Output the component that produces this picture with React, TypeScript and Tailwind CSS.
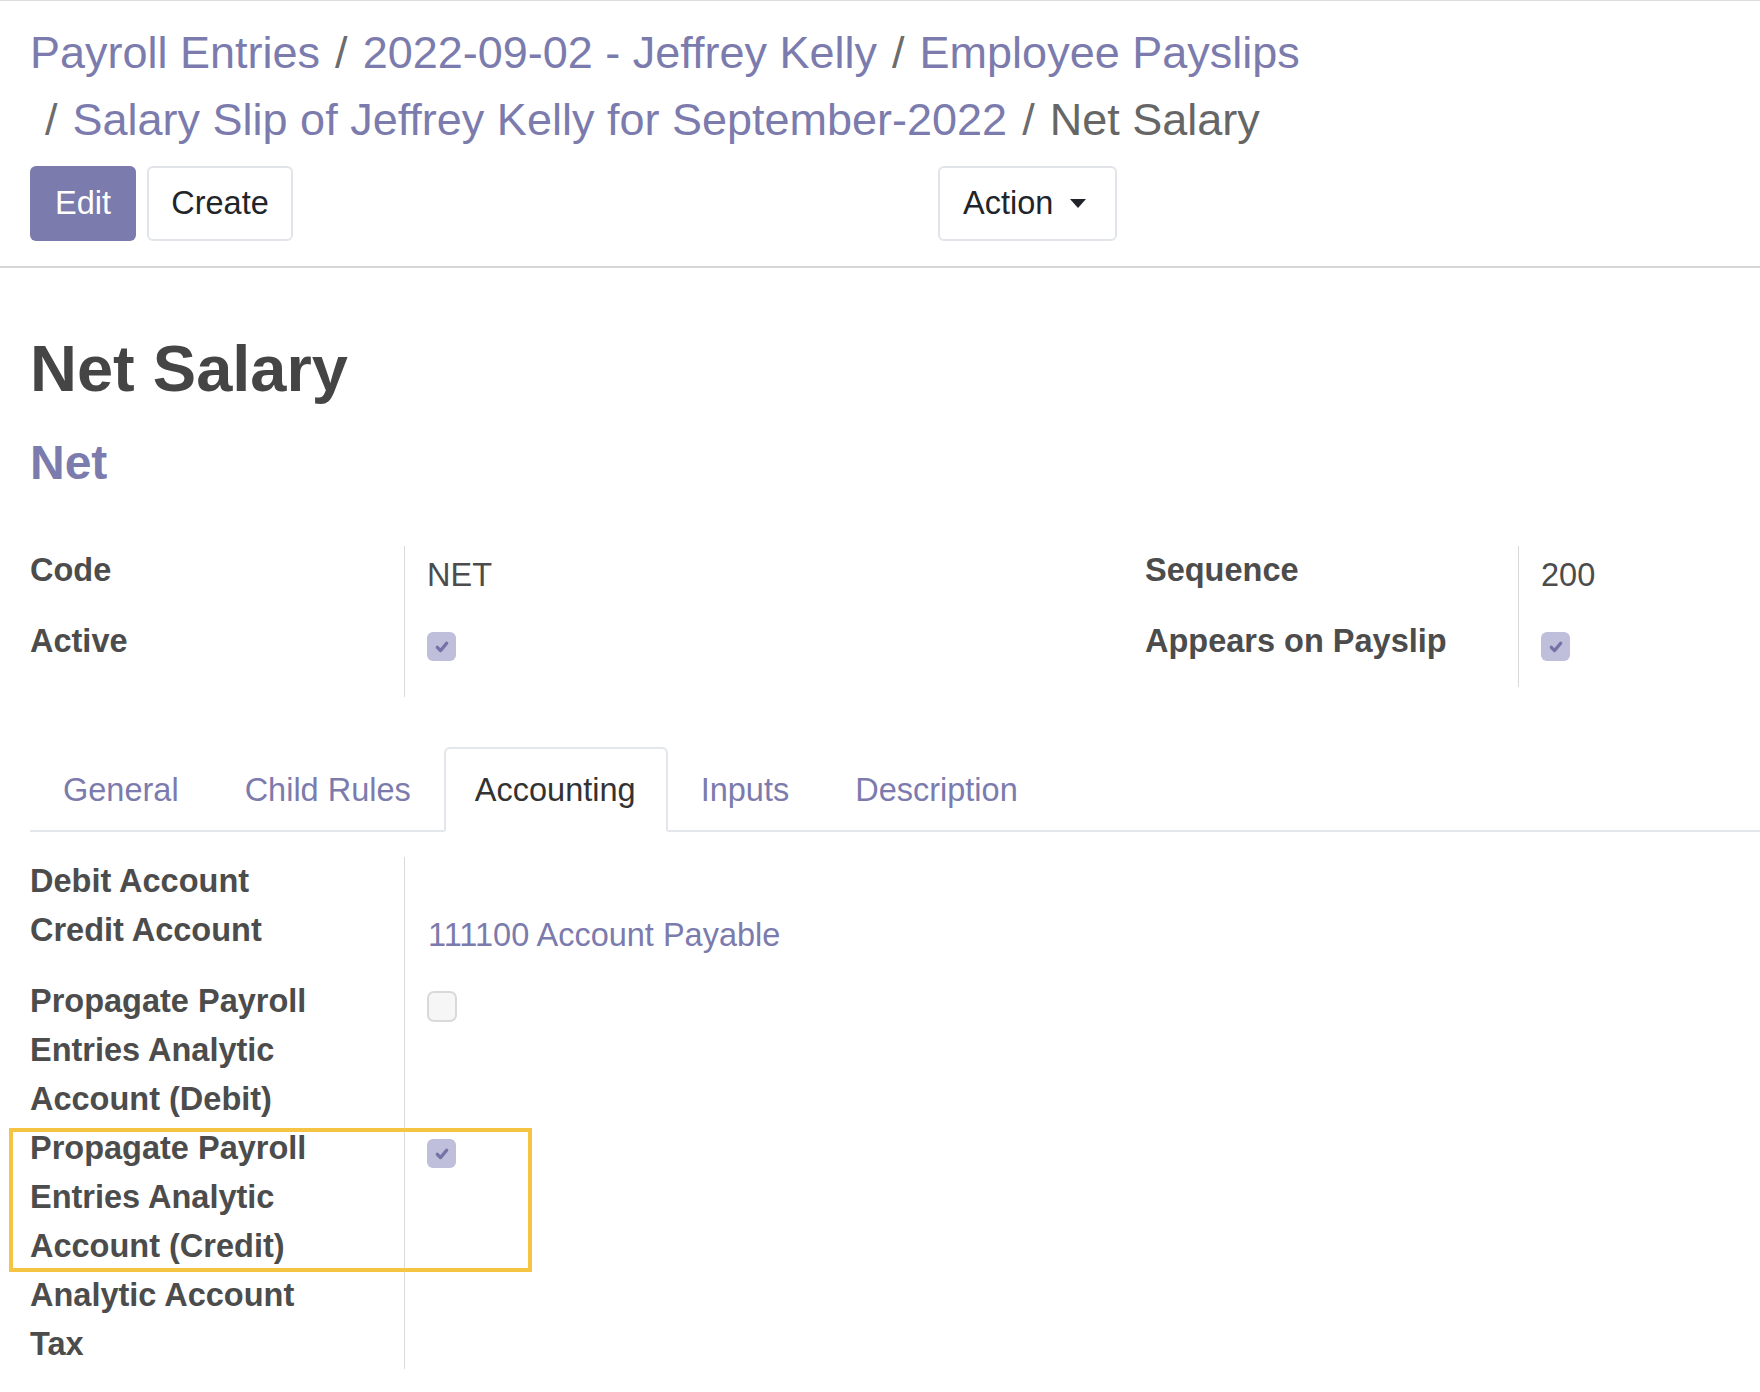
const crumbs = [
  "Payroll Entries",
  "2022-09-02 - Jeffrey Kelly",
  "Employee Payslips",
  "Salary Slip of Jeffrey Kelly for September-2022",
];

const tabs = ["General", "Child Rules", "Accounting", "Inputs", "Description"];

const CheckBox = ({ checked }: { checked: boolean }) =>
  checked ? (
    <div className="w-[29px] h-[29px] rounded-[6px] bg-[#bfbedb] flex items-center justify-center">
      <svg width="22" height="22" viewBox="0 0 16 16">
        <path
          d="M4.6 8.2 L6.9 10.6 L11.4 5.3"
          fill="none"
          stroke="#7473a8"
          strokeWidth="2.4"
          strokeLinecap="round"
          strokeLinejoin="round"
        />
      </svg>
    </div>
  ) : (
    <div className="w-[30px] h-[31px] rounded-[7px] bg-[#f6f6f6] border-2 border-[#d9d9d9]" />
  );

const Label = ({ children }: { children: React.ReactNode }) => (
  <div className="border-r border-[#d9d9d9] pr-[20px] font-bold text-[#4c4c4c] leading-[49px]">
    {children}
  </div>
);

const App = () => {
  return (
    <div className="w-[1760px] h-[1392px] overflow-hidden bg-white relative font-['Liberation_Sans',Arial,sans-serif] text-[32.5px] text-[#4c4c4c] border-t border-[#dcdcdc]">
      {/* control panel */}
      <div className="px-[30px] pt-[18px] pb-[25px] border-b-2 border-[#d6d6d6]">
        <ol className="flex flex-wrap text-[45px] leading-[67px]">
          {crumbs.map((c, i) => (
            <li key={c} className="flex">
              {i > 0 && <span className="px-[15px] text-[#6c6c6c]">/</span>}
              <a className="text-[#7c7bad]">{c}</a>
            </li>
          ))}
          <li className="flex">
            <span className="px-[15px] text-[#6c6c6c]">/</span>
            <span className="text-[#666666]">Net Salary</span>
          </li>
        </ol>
        <div className="flex mt-[13px]">
          <div className="w-[908px] shrink-0 flex gap-[11px]">
            <button className="h-[75px] w-[106px] rounded-[6px] bg-[#7c7bad] text-white">Edit</button>
            <button className="h-[75px] w-[146px] rounded-[6px] border-2 border-[#e1e4e8] text-[#212529]">
              Create
            </button>
          </div>
          <button className="h-[75px] w-[179px] shrink-0 rounded-[6px] border-2 border-[#e1e4e8] text-[#212529] flex items-center pl-[23px] gap-[17px]">
            <span>Action</span>
            <span className="w-0 h-0 border-t-[9px] border-x-[8px] border-x-transparent border-t-[#212529]" />
          </button>
        </div>
      </div>

      {/* sheet */}
      <div className="pl-[30px]">
        <h1 className="mt-[62px] text-[65px] leading-[78px] font-bold text-[#454545]">Net Salary</h1>
        <h2 className="mt-[25px] text-[48px] leading-[60px] font-bold text-[#7c7bad]">Net</h2>

        <div className="flex items-start mt-[53px]">
          <div className="w-[1115px] shrink-0 grid grid-cols-[375px_1fr]">
            <Label>Code</Label>
            <div className="pl-[22px] pt-[5px] h-[71px] leading-[49px]">NET</div>
            <Label>Active</Label>
            <div className="pl-[22px] pt-[15px] h-[80px]">
              <CheckBox checked />
            </div>
          </div>
          <div className="w-[700px] shrink-0 grid grid-cols-[374px_1fr]">
            <Label>Sequence</Label>
            <div className="pl-[22px] pt-[5px] h-[71px] leading-[49px]">200</div>
            <Label>Appears on Payslip</Label>
            <div className="pl-[22px] pt-[15px] h-[70px]">
              <CheckBox checked />
            </div>
          </div>
        </div>

        {/* tabs */}
        <div className="mt-[50px] flex border-b-2 border-[#e3e6ea] leading-[49px]">
          {tabs.map((t) =>
            t === "Accounting" ? (
              <div
                key={t}
                className="pl-[29px] pr-[30px] pt-[17px] pb-[13px] border-2 border-[#e3e6ea] border-b-white rounded-t-[6px] -mb-[2px] bg-white text-[#333333]"
              >
                {t}
              </div>
            ) : (
              <div key={t} className="px-[31px] pt-[17px] pb-[13px] border-2 border-transparent text-[#7c7bad]">
                {t}
              </div>
            )
          )}
        </div>

        {/* accounting page */}
        <div className="mt-[25px] w-[1115px] grid grid-cols-[375px_1fr]">
          <Label>Debit Account</Label>
          <div className="h-[49px]" />
          <Label>Credit Account</Label>
          <div className="pl-[23px] pt-[5px] h-[71px] leading-[49px] text-[#7c7bad]">111100 Account Payable</div>
          <Label>Propagate Payroll Entries Analytic Account (Debit)</Label>
          <div className="pl-[22px] pt-[14px]">
            <CheckBox checked={false} />
          </div>
          <Label>Propagate Payroll Entries Analytic Account (Credit)</Label>
          <div className="pl-[22px] pt-[15px]">
            <CheckBox checked />
          </div>
          <Label>Analytic Account</Label>
          <div />
          <Label>Tax</Label>
          <div />
        </div>
      </div>

      {/* highlight annotation */}
      <div className="absolute left-[9px] top-[1127px] w-[523px] h-[144px] border-4 border-[#f6c443] pointer-events-none" />
    </div>
  );
};

export default App;
